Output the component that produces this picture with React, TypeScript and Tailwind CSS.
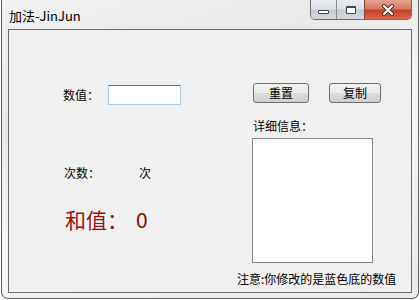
const font = "font-['Noto_Sans_CJK_SC','Noto_Sans',sans-serif]";

const CaptionButtons = () => (
  <div className="absolute top-0 right-[6px] flex h-[20px] overflow-hidden rounded-b-[5px] border border-t-0 border-[#6e6e6e]">
    {/* Minimise */}
    <div className="flex w-[26px] items-end justify-center border-r border-[#8a8a8a] bg-[linear-gradient(to_bottom,#e9ecef_0%,#dde1e6_45%,#c6cbd2_55%,#d3d8de_100%)] pb-[5px]">
      <div className="h-[4px] w-[11px] rounded-[1px] border border-[#3d4650] bg-white" />
    </div>
    {/* Maximise */}
    <div className="flex w-[28px] items-center justify-center border-r border-[#7a4a40] bg-[linear-gradient(to_bottom,#e9ecef_0%,#dde1e6_45%,#c6cbd2_55%,#d3d8de_100%)]">
      <div className="h-[8px] w-[10px] rounded-[1px] border border-[#3d4650] border-t-2 bg-white" />
    </div>
    {/* Close */}
    <div className="flex w-[46px] items-center justify-center bg-[linear-gradient(to_bottom,#e8a493_0%,#d67863_45%,#c2432a_55%,#d8664a_100%)]">
      <svg width="14" height="12" viewBox="0 0 14 12">
        <path d="M3 2 L11 10 M11 2 L3 10" stroke="#4a2a24" strokeWidth="4" strokeLinecap="round" />
        <path d="M3 2 L11 10 M11 2 L3 10" stroke="#ffffff" strokeWidth="2.2" strokeLinecap="round" />
      </svg>
    </div>
  </div>
);

const WinButton = ({ label, width }: { label: string; width: string }) => (
  <button
    className={`${width} flex h-[20px] items-center justify-center rounded-[3px] border border-[#707070] bg-[linear-gradient(to_bottom,#f2f2f2_0%,#ebebeb_50%,#dddddd_50%,#cfcfcf_100%)] text-[12px] leading-none text-black`}
  >
    {label}
  </button>
);

export default function App() {
  return (
    <div className={`h-[300px] w-[420px] bg-white ${font}`}>
      <div className="relative ml-[1px] flex h-[299px] w-[418px] flex-col rounded-b-[7px] border border-t-0 border-[#5e5e5e] bg-[linear-gradient(160deg,#f1f1f1_0%,#e9e9e9_30%,#f6f6f6_55%,#eaeaea_100%)] px-[6px] pb-[5px]">
        {/* Title bar */}
        <div className="flex h-[29px] shrink-0 items-center pl-[1px] pt-[2px] text-[13px] text-black">
          加法-JinJun
        </div>
        <CaptionButtons />

        {/* Client area */}
        <div className="flex flex-1 border border-[#6b6b6b] bg-[#f0f0f0] text-[12px] leading-[16px] text-black">
          {/* Left column */}
          <div className="flex w-[225px] shrink-0 flex-col pl-[54px] pt-[55px]">
            <div className="flex h-[20px] items-center">
              <span className="w-[45px]">数值：</span>
              <input className="h-[20px] w-[73px] border border-[#a9cbe6] border-t-[#3f7db0] bg-white outline-none" />
            </div>
            <div className="mt-[60px] flex">
              <span className="w-[76px] pl-[1px]">次数：</span>
              <span>次</span>
            </div>
            <div className="mt-[26px] flex items-center pl-[2px] text-[21px] leading-[24px] text-[#9a1010]">
              <span className="w-[71px]">和值：</span>
              <span className="text-[#860a0a]">0</span>
            </div>
          </div>

          {/* Right column */}
          <div className="flex flex-col pt-[53px]">
            <div className="ml-[19px] flex gap-[20px]">
              <WinButton label="重置" width="w-[56px]" />
              <WinButton label="复制" width="w-[52px]" />
            </div>
            <div className="ml-[19px] mt-[15px]">详细信息：</div>
            <div className="ml-[18px] mt-[4px] h-[125px] w-[121px] border border-[#828790] bg-white" />
            <div className="ml-[3px] mt-[8px] whitespace-nowrap">注意:你修改的是蓝色底的数值</div>
          </div>
        </div>
      </div>
    </div>
  );
}
